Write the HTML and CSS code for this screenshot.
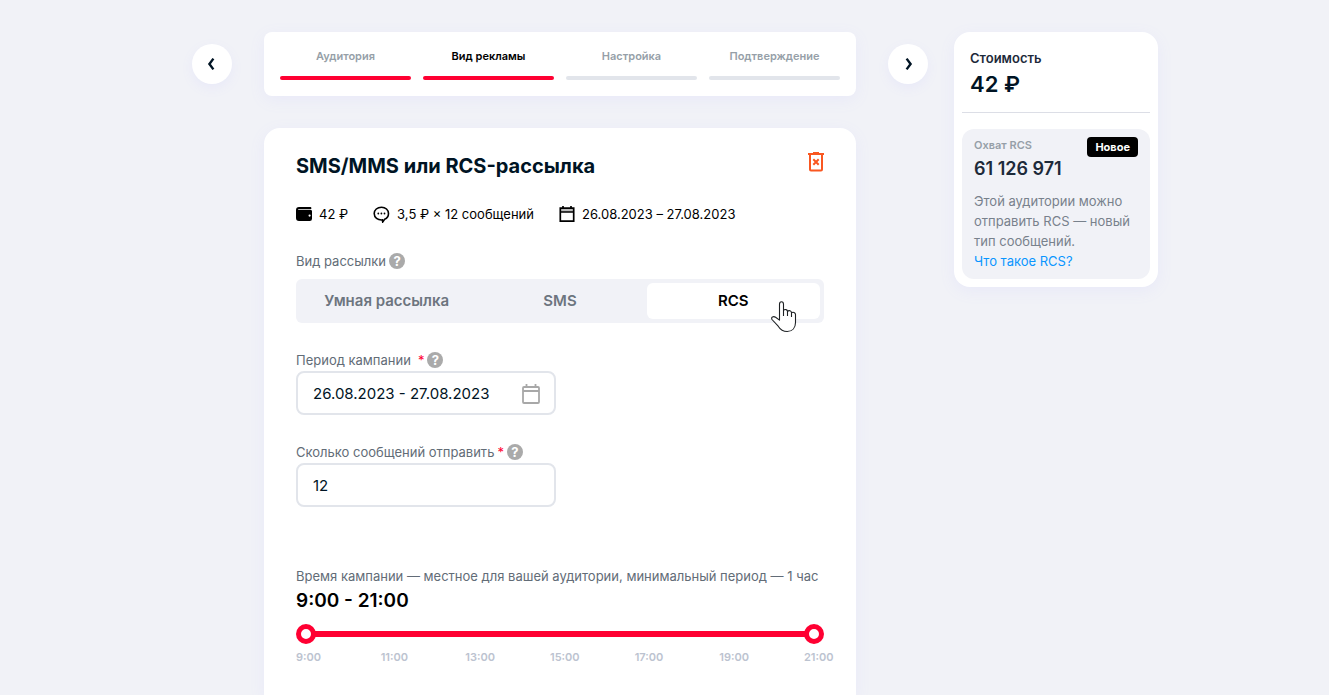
FILE: index.html
```
<!DOCTYPE html>
<html lang="ru">
<head>
<meta charset="utf-8">
<meta name="viewport" content="width=device-width, initial-scale=1">
<title>SMS/MMS или RCS-рассылка</title>
<link rel="stylesheet" href="styles.css">
</head>
<body>
<div class="page">
  <button class="nav-button" type="button" aria-label="Назад">
    <svg width="16" height="16" viewBox="0 0 16 16"><path d="M9.400 2.600 5.400 8l4 5.400" /></svg>
  </button>

  <main class="content">
    <nav class="steps" aria-label="Шаги">
      <a class="step step-done" href="#">Аудитория</a>
      <a class="step step-done step-current" href="#" aria-current="step">Вид рекламы</a>
      <a class="step" href="#">Настройка</a>
      <a class="step" href="#">Подтверждение</a>
    </nav>

    <form class="card">
      <header class="card-header">
        <h1 class="title">SMS/MMS или RCS-рассылка</h1>
        <button class="delete-button" type="button" aria-label="Удалить">
          <svg width="16" height="20" viewBox="0 0 16 20" fill="none" stroke="currentColor" stroke-width="2">
            <path d="M0 2h16M5 1h6M2 2v15.5Q2 18.5 3 18.5h10q1 0 1-1V2" />
            <path d="M5.3 7.300l5.400 5.400M10.700 7.300l-5.400 5.400" />
          </svg>
        </button>
      </header>

      <ul class="summary">
        <li class="summary-item">
          <svg width="16" height="16" viewBox="0 0 16 16"><path d="M3 1h11.500q.8 0 .8.800v1.200H2.200v.700h12.300Q16 3.700 16 5.200v7.600q0 2.200-2.200 2.200H3q-3 0-3-3V4q0-3 3-3z"/><circle cx="13.600" cy="9.600" r="1.100" fill="#fff"/></svg>
          42 ₽
        </li>
        <li class="summary-item">
          <svg width="17" height="17" viewBox="0 0 17 17"><path d="M8.500 1.200c4 0 7 2.700 7 6.300 0 2.700-1.500 4.800-3.900 5.800L9.700 16l-.3-2.100C4.700 14.300 1.200 11.500 1.200 7.600c0-3.700 3.100-6.400 7.300-6.400z" fill="none" stroke="#000" stroke-width="1.600"/><circle cx="5.300" cy="7.500" r=".9"/><circle cx="8.400" cy="7.500" r=".9"/><circle cx="11.500" cy="7.500" r=".9"/></svg>
          3,5 ₽ × 12 сообщений
        </li>
        <li class="summary-item">
          <svg width="16" height="16" viewBox="0 0 16 16"><path d="M1.500 2h13v4h-13z" fill="#bbb"/><path d="M1.300 2.200h13.400v12.900H1.300zM1.300 6h13.400M4 0v2M12 0v2" fill="none" stroke="#000" stroke-width="1.700"/></svg>
          26.08.2023 – 27.08.2023
        </li>
      </ul>

      <fieldset class="field type-field">
        <legend class="label">Вид рассылки <button class="help" type="button" aria-label="Справка о виде рассылки">?</button></legend>
        <div class="segments">
          <label class="segment"><input class="segment-input" type="radio" name="type"><span class="segment-text">Умная рассылка</span></label>
          <label class="segment"><input class="segment-input" type="radio" name="type"><span class="segment-text">SMS</span></label>
          <label class="segment"><input class="segment-input" type="radio" name="type" checked><span class="segment-text">RCS</span>
            <svg class="pointer" width="27" height="33" viewBox="0 0 27 33"><path d="M8.500 18.500V4.200C8.500 1 12.500 1 12.500 4.200v6.300c1.300-1.700 4-1 4 1 1.300-1.500 4-.8 4 1.200 1.500-1.100 4-.3 4 1.900v7.900c0 5.300-3.100 9-8.300 9-4.200 0-6.900-1.900-9-5.300L1 19.500c-1.300-2.300 1.400-3.600 3.600-2.200l3.900 2.800zM12.500 10v6M16.500 11.500V16M20.500 12.700V17" fill="#fff" stroke="#1d2023" stroke-width="1.100" stroke-linejoin="round"/></svg>
          </label>
        </div>
      </fieldset>

      <div class="field">
        <div class="label"><label for="period">Период кампании</label> <span class="required required-wide">*</span> <button class="help" type="button" aria-label="Справка о периоде">?</button></div>
        <div class="control">
          <input class="input" id="period" type="text" value="26.08.2023 - 27.08.2023">
          <svg width="18" height="20" viewBox="0 0 18 20" fill="none" stroke="#a8a8a8" stroke-width="1.800"><rect x="1" y="3" width="16" height="16" rx="1"/><path d="M1 7h16M4.500 0v3M13.500 0v3"/></svg>
        </div>
      </div>

      <div class="field">
        <div class="label"><label for="count">Сколько сообщений отправить</label> <span class="required">*</span> <button class="help" type="button" aria-label="Справка о количестве">?</button></div>
        <div class="control"><input class="input" id="count" type="text" inputmode="numeric" value="12"></div>
      </div>

      <section class="time">
        <p class="label" id="time-label">Время кампании — местное для вашей аудитории, минимальный период — 1 час</p>
        <output class="time-value">9:00 - 21:00</output>
        <div class="range" role="group" aria-labelledby="time-label">
          <input class="range-input" type="range" min="9" max="21" value="9" aria-label="Начало">
          <input class="range-input" type="range" min="9" max="21" value="21" aria-label="Окончание">
        </div>
        <div class="ticks"><span>9:00</span><span>11:00</span><span>13:00</span><span>15:00</span><span>17:00</span><span>19:00</span><span>21:00</span></div>
      </section>
    </form>
  </main>

  <button class="nav-button" type="button" aria-label="Далее">
    <svg width="16" height="16" viewBox="0 0 16 16"><path d="m6.600 2.600 4 5.400-4 5.400" /></svg>
  </button>

  <aside class="cost">
    <div class="cost-head">
      <h2 class="cost-title">Стоимость</h2>
      <p class="cost-value">42 ₽</p>
    </div>
    <section class="reach">
      <div class="reach-head">
        <h3 class="reach-title">Охват RCS</h3>
        <span class="badge">Новое</span>
      </div>
      <p class="reach-value">61 126 971</p>
      <p class="reach-text">Этой аудитории можно отправить RCS — новый тип сообщений.</p>
      <a class="reach-link" href="#">Что такое RCS?</a>
    </section>
  </aside>
</div>
</body>
</html>
```
FILE: styles.css
```
* { box-sizing: border-box; }

body {
  margin: 0;
  background: #f1f2f7;
  color: #000;
  font: 13px/20px Inter, Roboto, "Liberation Sans", sans-serif;
}

h1, h2, h3, p, ul, fieldset { margin: 0; padding: 0; }
button, input { font: inherit; }
button { padding: 0; border: 0; cursor: pointer; }

.page {
  min-height: 100vh;
  padding: 32px 0 0 21px;
  display: grid;
  grid-template-columns: 40px minmax(0, 592px) 40px 198px;
  column-gap: 32px;
  justify-content: center;
  align-items: start;
}

.nav-button {
  width: 40px;
  height: 40px;
  margin-top: 12px;
  display: grid;
  place-items: center;
  border-radius: 50%;
  background: #fff;
  box-shadow: 0 4px 12px #e8e9f8;
}
.nav-button path { fill: none; stroke: #001424; stroke-width: 2.4; }

.content {
  align-self: stretch;
  display: flex;
  flex-direction: column;
  gap: 32px;
}

.steps {
  display: grid;
  grid-template-columns: repeat(4, 1fr);
  gap: 12px;
  padding: 14px 16px 16px;
  border-radius: 8px;
  background: #fff;
  box-shadow: 0 4px 16px #e8e9f8;
}
.step {
  height: 34px;
  color: #969fa8;
  font-size: 11px;
  font-weight: 600;
  text-align: center;
  text-decoration: none;
}
.step::after {
  content: "";
  display: block;
  height: 4px;
  margin-top: 10px;
  border-radius: 2px;
  background: #e2e5eb;
}
.step-done::after { background: #ff0032; }
.step-current { color: #000; }

.card {
  flex: 1;
  padding: 24px 32px;
  border-radius: 16px 16px 0 0;
  background: #fff;
  box-shadow: 0 4px 16px #e8e9f8;
}
.card-header {
  display: flex;
  justify-content: space-between;
  align-items: flex-start;
}
.title { color: #001424; font-size: 20px; line-height: 28px; font-weight: 700; }
.delete-button { height: 20px; background: none; color: #f95721; }
.delete-button svg { display: block; }

.summary {
  display: flex;
  gap: 25px;
  margin-top: 24px;
  list-style: none;
}
.summary-item { display: flex; align-items: center; gap: 7px; }

.field { border: 0; margin-top: 27px; }
.label {
  display: flex;
  align-items: center;
  gap: 3px;
  padding: 0;
  color: #626c77;
  line-height: 20px;
}
.required { color: #ff0032; }
.required-wide { margin-left: 4px; }
.help {
  width: 16px;
  height: 16px;
  border-radius: 50%;
  background: #aaa;
  color: #fff;
  line-height: 16px;
  font-weight: 700;
}

.segments {
  display: grid;
  grid-template-columns: repeat(3, 1fr);
  margin-top: 8px;
  padding: 4px;
  border-radius: 6px;
  background: #f1f2f7;
}
.segment { position: relative; cursor: pointer; }
.segment-input { position: absolute; opacity: 0; }
.segment-text {
  display: block;
  border-radius: 6px;
  color: #6d757f;
  font-size: 15px;
  line-height: 36px;
  font-weight: 600;
  text-align: center;
}
.segment-input:checked + .segment-text { background: #fff; color: #000; }
.pointer { position: absolute; right: 22px; top: 17px; }

.control {
  width: 260px;
  max-width: 100%;
  height: 44px;
  margin-top: 1px;
  padding: 2px 14px 0 15px;
  display: flex;
  align-items: center;
  border: 2px solid #e2e5eb;
  border-radius: 8px;
}
.input {
  flex: 1;
  min-width: 0;
  padding: 0;
  border: 0;
  outline: 0;
  background: none;
  color: #001424;
  font-size: 15px;
  line-height: 24px;
}

.time { margin-top: 59px; }
.time-value { display: block; margin-top: 1px; font-size: 19px; line-height: 28px; font-weight: 600; }

.range { display: grid; margin-top: 9px; align-items: center; }
.range::before {
  content: "";
  grid-area: 1 / 1;
  height: 6px;
  margin: 0 10px;
  background: #ff0032;
}
.range-input {
  grid-area: 1 / 1;
  width: 100%;
  height: 20px;
  margin: 0;
  appearance: none;
  background: none;
  pointer-events: none;
}
.range-input::-webkit-slider-thumb {
  appearance: none;
  box-sizing: border-box;
  width: 20px;
  height: 20px;
  border: 5px solid #ff0032;
  border-radius: 50%;
  background: #fff;
  pointer-events: auto;
}
.ticks {
  display: grid;
  grid-template-columns: repeat(6, 1fr) 30px;
  margin: 3px -10px 0 0;
  color: #bcc3d0;
  font-size: 11px;
  font-weight: 600;
}

.cost {
  width: 204px;
  margin-left: -6px;
  padding: 16px 8px 8px;
  border-radius: 16px;
  background: #fff;
  box-shadow: 0 4px 16px #e8e9f8;
}
.cost-head { padding: 0 8px 12px; border-bottom: 1px solid #dcdee6; }
.cost-title { color: #1d2a3a; font-size: 13px; font-weight: 600; }
.cost-value { color: #001424; font-size: 22px; line-height: 32px; font-weight: 600; }

.reach {
  margin-top: 16px;
  padding: 8px 12px;
  border-radius: 12px;
  background: #f1f2f7;
}
.reach-head { display: flex; justify-content: space-between; height: 20px; }
.reach-title { color: #969fa8; font-size: 11px; line-height: 16px; font-weight: 600; }
.badge {
  padding: 0 8px;
  border-radius: 4px;
  background: #000;
  color: #fff;
  font-size: 11px;
  font-weight: 700;
}
.reach-value { color: #1d2a3a; font-size: 18px; line-height: 24px; font-weight: 600; }
.reach-text { margin-top: 10px; color: #78818c; }
.reach-link { color: #0a96ff; text-decoration: none; }
```
